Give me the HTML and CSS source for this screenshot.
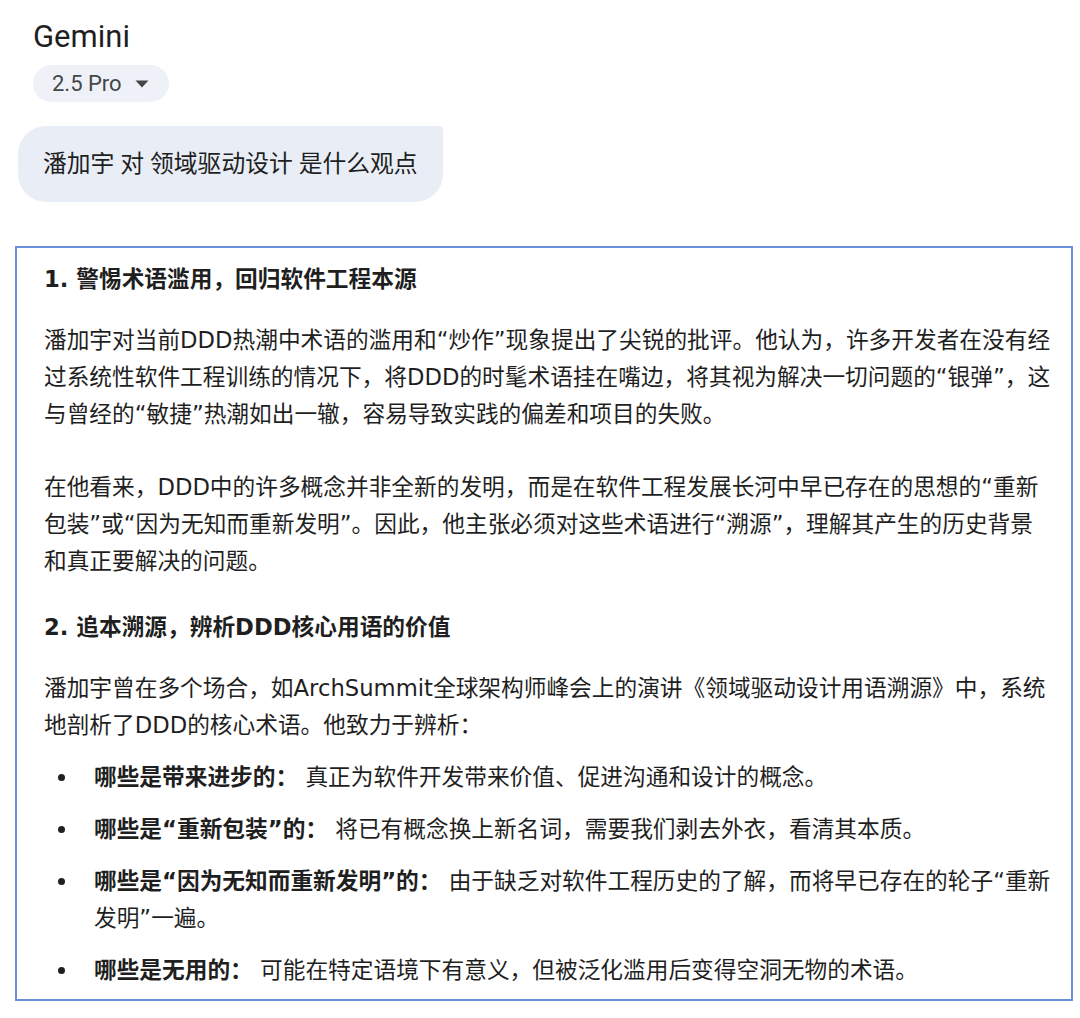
FILE: index.html
```html
<!DOCTYPE html>
<html lang="zh-CN">
<head>
  <meta charset="UTF-8">
  <meta name="viewport" content="width=device-width, initial-scale=1.0">
  <title>Gemini</title>
  <link rel="stylesheet" href="styles.css">
</head>
<body>
  <main class="chat">
    <!-- Header: app name + model switcher -->
    <header class="top">
      <div class="brand">Gemini</div>
      <button class="model-pill">
        <span>2.5 Pro</span>
        <svg class="caret" width="14" height="8" viewBox="0 0 14 8"><path d="M0.5 0.5h13L7 7.5z" fill="#444746"/></svg>
      </button>
    </header>

    <div class="query">潘加宇 对 领域驱动设计 是什么观点</div>

    <!-- Model answer -->
    <section class="answer">
      <h3>1. 警惕术语滥用，回归软件工程本源</h3>
      <p>潘加宇对当前DDD热潮中术语的滥用和“炒作”现象提出了尖锐的批评。他认为，许多开发者在没有经过系统性软件工程训练的情况下，将DDD的时髦术语挂在嘴边，将其视为解决一切问题的“银弹”，这与曾经的“敏捷”热潮如出一辙，容易导致实践的偏差和项目的失败。</p>
      <p>在他看来，DDD中的许多概念并非全新的发明，而是在软件工程发展长河中早已存在的思想的“重新包装”或“因为无知而重新发明”。因此，他主张必须对这些术语进行“溯源”，理解其产生的历史背景和真正要解决的问题。</p>
      <h3>2. 追本溯源，辨析DDD核心用语的价值</h3>
      <p>潘加宇曾在多个场合，如ArchSummit全球架构师峰会上的演讲《领域驱动设计用语溯源》中，系统地剖析了DDD的核心术语。他致力于辨析：</p>
      <ul>
        <li><strong>哪些是带来进步的：</strong> 真正为软件开发带来价值、促进沟通和设计的概念。</li>
        <li><strong>哪些是“重新包装”的：</strong> 将已有概念换上新名词，需要我们剥去外衣，看清其本质。</li>
        <li><strong>哪些是“因为无知而重新发明”的：</strong> 由于缺乏对软件工程历史的了解，而将早已存在的轮子“重新发明”一遍。</li>
        <li><strong>哪些是无用的：</strong> 可能在特定语境下有意义，但被泛化滥用后变得空洞无物的术语。</li>
      </ul>
    </section>
  </main>
</body>
</html>
```

FILE: styles.css
```css
body {
  margin: 0;
  background-color: #fff;
  color: #1f1f1f;
  font-family: Roboto, "Noto Sans CJK SC", sans-serif;
}
.chat {
  padding: 17px 7px 0 15px;
}
.top {
  padding-left: 18px;
}
.brand {
  font-size: 31px;
  line-height: 40px;
  color: #1f1f1f;
}
.model-pill {
  margin-top: 8px;
  display: flex;
  align-items: center;
  gap: 13px;
  height: 37px;
  padding: 0 20px 0 19px;
  border: none;
  border-radius: 19px;
  background-color: #eef2f8;
  color: #444746;
  font-family: inherit;
  font-size: 22px;
}
.caret {
  display: block;
}
.query {
  display: inline-block;
  margin: 24px 0 0 3px;
  padding: 0 25px;
  line-height: 76px;
  font-size: 23.8px;
  background-color: #e9eef6;
  border-radius: 28px 4px 28px 28px;
}
.answer {
  box-sizing: border-box;
  margin-top: 44px;
  height: 755px;
  overflow: hidden;
  padding: 13px 19px 0 27px;
  border: 2px solid #6a8fdb;
  font-family: "DejaVu Sans", "Noto Sans CJK SC", sans-serif;
  font-size: 22.7px;
  line-height: 37px;
}
.answer h3, .answer p, .answer ul {
  margin: 0;
  font-size: inherit;
}
.answer h3 {
  font-weight: 700;
}
.answer p + p {
  margin-top: 36px;
}
.answer p + h3 {
  margin-top: 29px;
}
.answer h3 + p {
  margin-top: 24px;
}
.answer ul {
  margin-top: 15px;
  padding: 0;
  list-style: none;
}
.answer li {
  padding-left: 50px;
}
.answer li + li {
  margin-top: 15px;
}
.answer li::before {
  content: "";
  display: inline-block;
  width: 7px;
  height: 7px;
  margin: 0 29px 0 -36px;
  vertical-align: 4px;
  border-radius: 50%;
  background-color: #1f1f1f;
}
.answer strong {
  font-weight: 700;
}
```
